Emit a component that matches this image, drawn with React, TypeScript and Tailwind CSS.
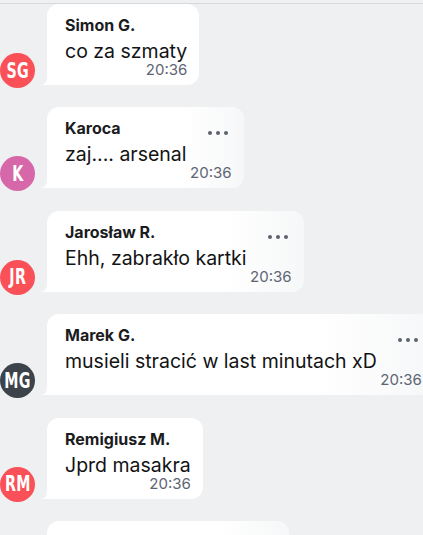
type Message = {
  initials: string;
  color: string;
  name: string;
  text: string;
  time: string;
  menu?: boolean;
};

const messages: Message[] = [
  { initials: "SG", color: "bg-[#fa5159]", name: "Simon G.", text: "co za szmaty", time: "20:36" },
  { initials: "K", color: "bg-[#d668a9]", name: "Karoca", text: "zaj.... arsenal", time: "20:36", menu: true },
  { initials: "JR", color: "bg-[#fa5159]", name: "Jarosław R.", text: "Ehh, zabrakło kartki", time: "20:36", menu: true },
  { initials: "MG", color: "bg-[#3c434b]", name: "Marek G.", text: "musieli stracić w last minutach xD", time: "20:36", menu: true },
  { initials: "RM", color: "bg-[#fa5159]", name: "Remigiusz M.", text: "Jprd masakra", time: "20:36" },
  { initials: "PW", color: "bg-[#3c434b]", name: "Paweł W.", text: "no i znów to samo", time: "20:37", menu: true },
];

const Dots = () => (
  <div className="absolute top-[24px] right-[16px] flex gap-[4px]">
    <span className="w-[4px] h-[4px] rounded-full bg-[#5c636d]" />
    <span className="w-[4px] h-[4px] rounded-full bg-[#5c636d]" />
    <span className="w-[4px] h-[4px] rounded-full bg-[#5c636d]" />
  </div>
);

const Bubble = ({ m }: { m: Message }) => {
  return (
    <div className="flex items-end shrink-0">
      <div
        className={`${m.color} w-[35px] h-[35px] shrink-0 -mb-[3px] rounded-full flex items-center justify-center overflow-hidden`}
      >
        <span
          className="text-white text-[22px] font-bold leading-none tracking-[0.5px] scale-x-[0.72] font-stretch-condensed"
          style={{ fontFamily: '"DejaVu Sans", Roboto, sans-serif' }}
        >
          {m.initials}
        </span>
      </div>
      <div
        className={`relative ml-[12px] h-[81px] shrink-0 rounded-[12px] rounded-bl-none pl-[18px] pr-[12px] pt-[11px] pb-[7px] flex flex-col ${
          m.menu ? "bg-[linear-gradient(to_right,#ffffff_70%,#f6f7f8)]" : "bg-white"
        }`}
      >
        <svg className="absolute -left-[7px] bottom-0" width="7" height="8" viewBox="0 0 7 8">
          <path d="M7 0 Q7 8 0 8 L7 8 Z" fill="#ffffff" />
        </svg>
        <p className="text-[16px] leading-[20px] font-bold text-[#1b1c1e] whitespace-nowrap">{m.name}</p>
        <p className={`mt-[5px] text-[19.5px] leading-[22px] text-[#121314] whitespace-nowrap ${m.menu ? "pr-[45px]" : ""}`}>
          {m.text}
        </p>
        <p className="text-[15px] leading-[16px] text-[#5d6573] text-right">{m.time}</p>
        {m.menu && <Dots />}
      </div>
    </div>
  );
};

export default function App() {
  return (
    <div
      className="w-[423px] h-[535px] overflow-hidden bg-[#eff0f2] pt-[3px]"
      style={{ fontFamily: 'Inter, "Noto Sans", sans-serif' }}
    >
      <div className="border-t border-[#d8d9db] flex flex-col gap-[22.4px]">
        {messages.map((m, i) => (
          <Bubble key={i} m={m} />
        ))}
      </div>
    </div>
  );
}
